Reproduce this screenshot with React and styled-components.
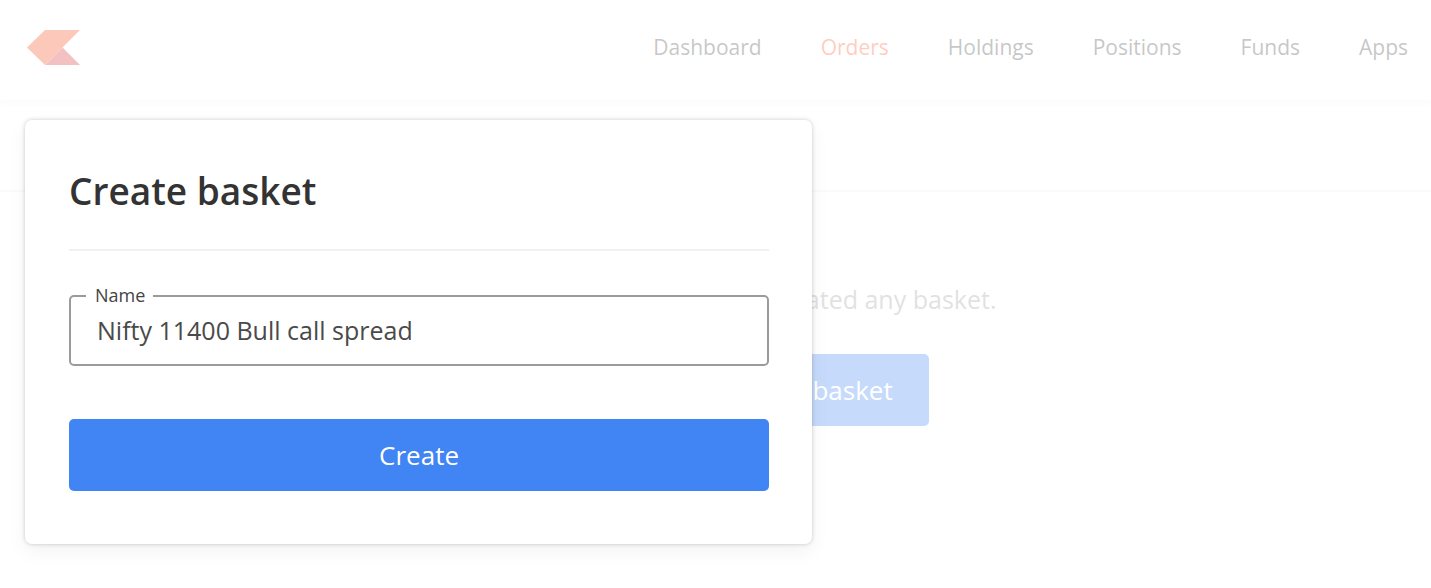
import { useState } from 'react';
import styled, { createGlobalStyle } from 'styled-components';

const GlobalStyle = createGlobalStyle`
  * {
    box-sizing: border-box;
  }

  body {
    margin: 0;
    background: #fff;
    color: #444;
    font-family: 'Open Sans', sans-serif;
  }
`;

const Page = styled.div`
  position: relative;
  min-height: 100vh;
`;

const Header = styled.header`
  display: flex;
  align-items: center;
  justify-content: space-between;
  height: 100px;
  padding: 0 23px 5px 27px;
  box-shadow: 0 1px 10px rgba(0, 0, 0, 0.1);
`;

const Logo = styled.svg`
  display: block;
  width: 53px;
  height: 35px;
`;

const Nav = styled.nav`
  display: flex;
  gap: 59px;
  padding-bottom: 2px;
`;

const NavLink = styled.a`
  color: ${({ $active }) => ($active ? '#ff5722' : '#444')};
  font-size: 21px;
  line-height: 30px;
  text-decoration: none;
`;

// Sub navigation strip under the header
const Tabs = styled.div`
  height: 92px;
  border-bottom: 2px solid #eee;
`;

const EmptyState = styled.main`
  display: flex;
  flex-direction: column;
  align-items: center;
  gap: 37px;
  padding: 89px 0 0 130px;
`;

const EmptyText = styled.p`
  margin: 0;
  color: #9b9b9b;
  font-size: 25px;
  line-height: 36px;
`;

const Button = styled.button`
  height: 72px;
  padding: 0 36px;
  border: 0;
  border-radius: 5px;
  background: #4184f3;
  color: #fff;
  font-family: inherit;
  font-size: 26px;
  cursor: pointer;
`;

// White veil that fades the page behind the modal
const Overlay = styled.div`
  position: absolute;
  inset: 0;
  padding: 120px 25px 0;
  background: rgba(255, 255, 255, 0.7);
`;

const Modal = styled.form`
  display: flex;
  flex-direction: column;
  width: 57%;
  padding: 44px 43px 53px 44px;
  border-radius: 7px;
  background: #fff;
  box-shadow: 0 0 4px rgba(0, 0, 0, 0.2), 0 8px 20px rgba(0, 0, 0, 0.05);
`;

const ModalTitle = styled.h2`
  margin: 0 0 44px;
  padding-bottom: 31px;
  border-bottom: 2px solid #f1f1f1;
  color: #333;
  font-size: 37px;
  font-weight: 600;
  line-height: 54px;
`;

const Field = styled.div`
  position: relative;
  margin-bottom: 53px;
`;

const Label = styled.label`
  position: absolute;
  top: -12px;
  left: 17px;
  padding: 0 8px 0 9px;
  background: #fff;
  font-size: 18px;
  line-height: 24px;
`;

const Input = styled.input`
  display: block;
  width: 100%;
  height: 71px;
  padding: 0 26px 2px;
  border: 2px solid #9b9b9b;
  border-radius: 5px;
  outline: none;
  background: #fff;
  color: #4a4a4a;
  font-family: inherit;
  font-size: 25px;
`;

const links = ['Dashboard', 'Orders', 'Holdings', 'Positions', 'Funds', 'Apps'];

const App = () => {
  const [name, setName] = useState('Nifty 11400 Bull call spread');

  return (
    <Page>
      <GlobalStyle />
      <Header>
        <Logo viewBox="0 0 53 35" aria-hidden="true">
          <path d="M18 0H53L18 35L0 17.5Z" fill="#f6461a" />
          <path d="M35.5 17.5L53 35H18Z" fill="#d73030" />
        </Logo>
        <Nav>
          {links.map((link) => (
            <NavLink key={link} href="#" $active={link === 'Orders'}>
              {link}
            </NavLink>
          ))}
        </Nav>
      </Header>
      <Tabs />
      <EmptyState>
        <EmptyText>You still have not created any basket.</EmptyText>
        <Button type="button">Create new basket</Button>
      </EmptyState>

      <Overlay>
        <Modal onSubmit={(e) => e.preventDefault()}>
          <ModalTitle>Create basket</ModalTitle>
          <Field>
            <Input id="basket-name" value={name} onChange={(e) => setName(e.target.value)} />
            <Label htmlFor="basket-name">Name</Label>
          </Field>
          <Button type="submit">Create</Button>
        </Modal>
      </Overlay>
    </Page>
  );
};

export default App;
